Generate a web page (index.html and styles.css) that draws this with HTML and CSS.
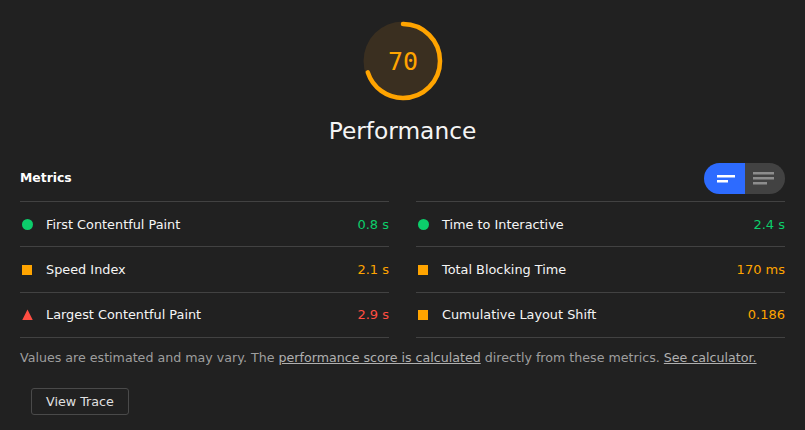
FILE: index.html
```html
<html>
<head>
	<link rel="stylesheet" href="styles.css">
</head>
<body>
	<div class="gauge">
		<svg class="gauge-ring" width="80" height="80" viewBox="0 0 80 80">
			<circle class="gauge-base" cx="40" cy="40" r="39.5"/>
			<circle class="gauge-arc" cx="40" cy="40" r="37" pathLength="100" stroke-dasharray="70 100" transform="rotate(-90 40 40)"/>
			<text class="gauge-score" x="40" y="49">70</text>
		</svg>
		<div class="gauge-label">Performance</div>
	</div>

	<div class="metrics-head">
		<div class="metrics-title">Metrics</div>
		<div class="toggle">
			<div class="toggle-half toggle-on">
				<svg width="18" height="8" viewBox="0 0 18 8"><path d="M0 0h18v2.5H0zM0 5h11v2.5H0z" fill="#fff"/></svg>
			</div>
			<div class="toggle-half toggle-off">
				<svg width="21" height="13" viewBox="0 0 21 13"><path d="M0 0h21v2.4H0zM0 5h21v2.4H0zM0 10h14v2.4H0z" fill="#8d8d8d"/></svg>
			</div>
		</div>
	</div>

	<div class="metrics">
		<div class="metric"><span class="icon dot"></span><span class="name">First Contentful Paint</span><span class="value good">0.8 s</span></div>
		<div class="metric"><span class="icon dot"></span><span class="name">Time to Interactive</span><span class="value good">2.4 s</span></div>
		<div class="metric"><span class="icon square"></span><span class="name">Speed Index</span><span class="value avg">2.1 s</span></div>
		<div class="metric"><span class="icon square"></span><span class="name">Total Blocking Time</span><span class="value avg">170 ms</span></div>
		<div class="metric"><span class="icon triangle"></span><span class="name">Largest Contentful Paint</span><span class="value bad">2.9 s</span></div>
		<div class="metric"><span class="icon square"></span><span class="name">Cumulative Layout Shift</span><span class="value avg">0.186</span></div>
	</div>

	<p class="note">Values are estimated and may vary. The <a href="#">performance score is calculated</a> directly from these metrics. <a href="#">See calculator.</a></p>

	<button class="trace">View Trace</button>
</body>
</html>
```

FILE: styles.css
```css
html, body {
	height: 100%;
}
body {
	margin: 0;
	padding: 21px 20px 0;
	box-sizing: border-box;
	background: #212121;
	color: #f5f5f5;
	font-family: "DejaVu Sans", sans-serif;
	font-size: 13px;
	overflow: hidden;
}

.gauge {
	display: flex;
	flex-direction: column;
	align-items: center;
}
.gauge-ring {
	display: block;
}
.gauge-base {
	fill: #3a2f20;
	stroke: none;
}
.gauge-arc {
	fill: none;
	stroke: #ffa400;
	stroke-width: 4.5;
	stroke-linecap: round;
}
.gauge-score {
	fill: #ffa400;
	font-family: "DejaVu Sans Mono", monospace;
	font-size: 25px;
	text-anchor: middle;
}
.gauge-label {
	margin-top: 12px;
	font-size: 23.3px;
	line-height: 36px;
	color: #f5f5f5;
}

.metrics-head {
	display: flex;
	justify-content: space-between;
	align-items: center;
	margin-top: 14px;
	height: 31px;
	margin-bottom: 7px;
}
.metrics-title {
	font-weight: 700;
	font-size: 12.4px;
	color: #fff;
	margin-bottom: 3px;
}
.toggle {
	display: flex;
	width: 81px;
	height: 31px;
	border-radius: 16px;
	overflow: hidden;
}
.toggle-half {
	flex: 1;
	display: flex;
	align-items: center;
	justify-content: center;
	background: #424242;
}
.toggle-on {
	background: #2d6bff;
	padding-left: 3px;
}
.toggle-off {
	padding-right: 3px;
}

.metrics {
	display: grid;
	grid-template-columns: 369px 369px;
	column-gap: 27px;
}
.metric {
	display: flex;
	align-items: center;
	height: 45.4px;
	box-sizing: border-box;
	border-top: 1px solid #424242;
	padding-left: 2px;
}
.metric:nth-last-child(-n+2) {
	border-bottom: 1px solid #424242;
	height: 46.4px;
}
.icon {
	width: 11px;
	height: 11px;
	margin-right: 13px;
	flex: none;
}
.dot {
	border-radius: 50%;
	background: #0cce6b;
}
.square {
	width: 10px;
	height: 10px;
	margin-right: 14px;
	background: #ffa400;
}
.triangle {
	background: #ff4e42;
	clip-path: polygon(50% 0, 100% 100%, 0 100%);
}
.name {
	flex: 1;
	font-size: 12.85px;
	color: #f5f5f5;
}
.good { color: #0cce6b; }
.avg { color: #ffa400; }
.bad { color: #ff4e42; }

.note {
	margin: 7px 0 0;
	font-size: 12.65px;
	line-height: 26px;
	color: #9e9e9e;
	white-space: nowrap;
}
.note a {
	color: #b0b0b0;
}

.trace {
	display: block;
	margin: 17px 0 0 11px;
	width: 98px;
	height: 27px;
	padding: 0;
	background: transparent;
	border: 1px solid #4a4a4a;
	border-radius: 3px;
	color: #e0e0e0;
	font: 12.7px "DejaVu Sans", sans-serif;
}
```
